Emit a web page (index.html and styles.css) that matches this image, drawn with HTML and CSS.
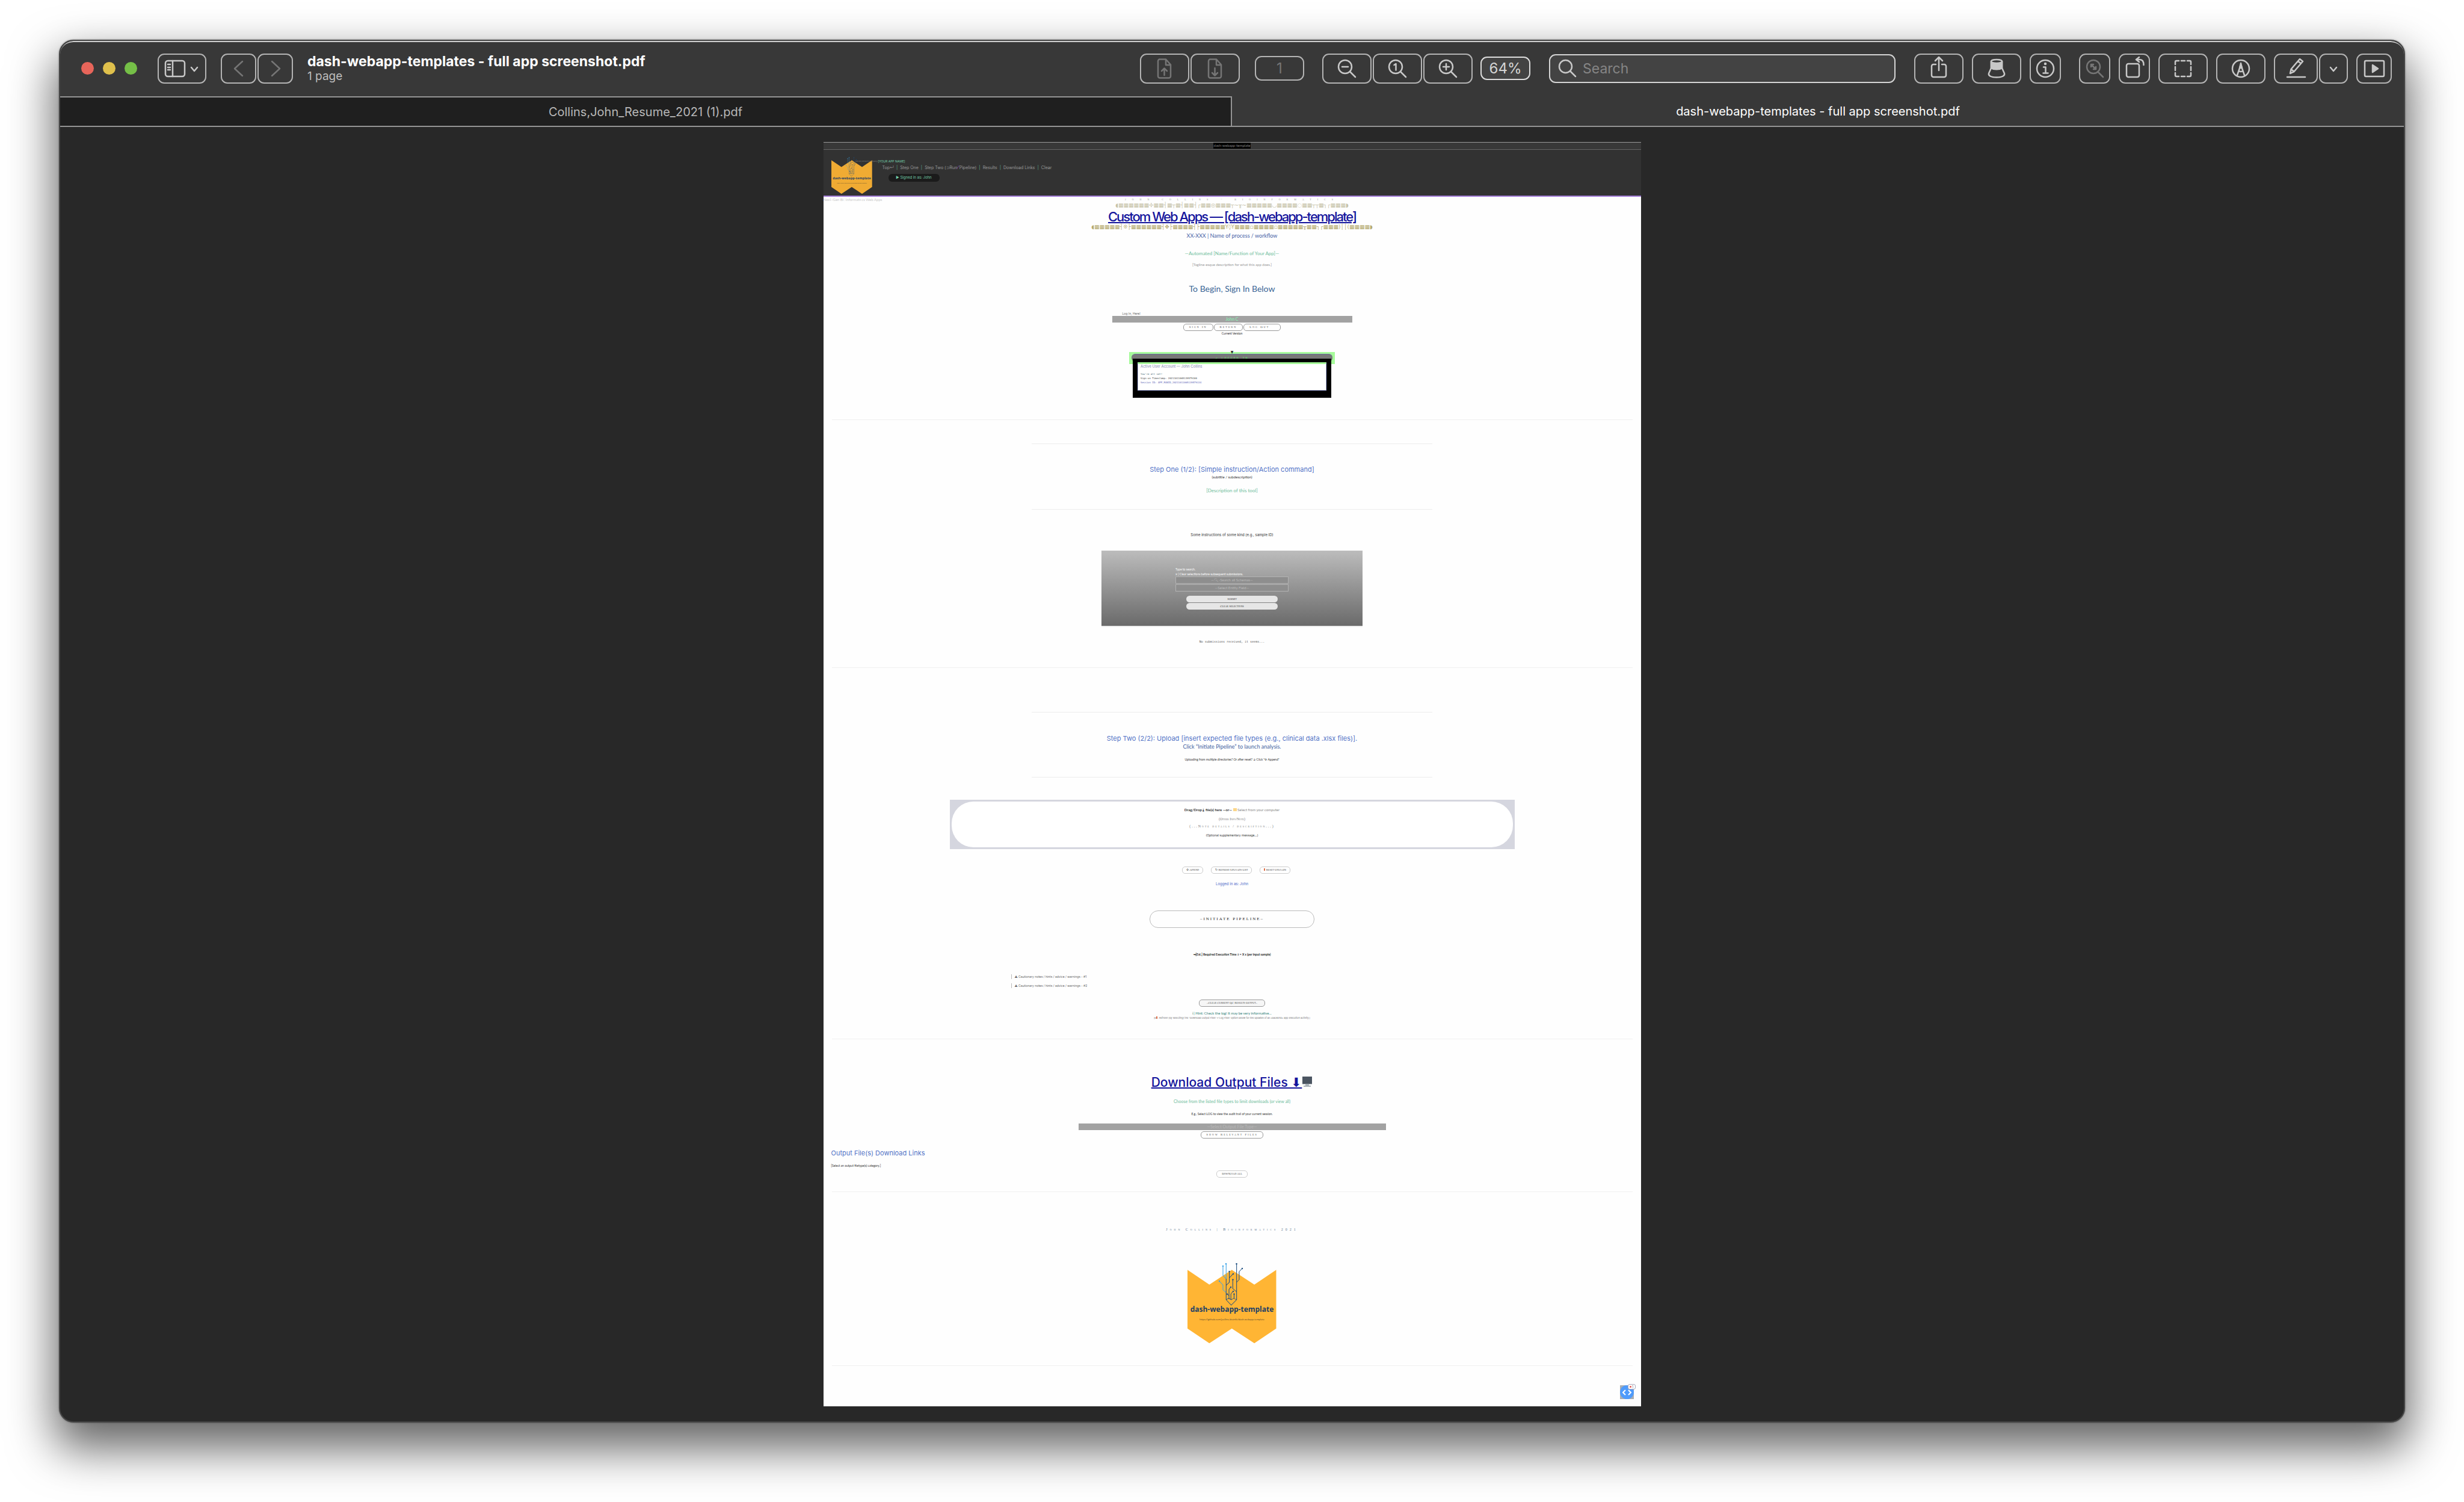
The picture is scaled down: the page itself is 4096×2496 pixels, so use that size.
FILE: index.html
```html
<!DOCTYPE html>
<html lang="en">
<head>
<meta charset="utf-8">
<title>dash-webapp-templates - full app screenshot.pdf</title>
<link rel="stylesheet" href="styles.css">
</head>
<body>
<svg class="defs" aria-hidden="true">
  <symbol id="logo" viewBox="0 0 148 133">
    <path fill="#ffb534" transform="scale(.5267 .296) translate(-126 -252)" d="M126 290 195 373 266 290 337 373 406 290V619L337 702 266 619 195 702 126 619Z"/>
    <g fill="none" stroke="#1f4f80" transform="scale(.5267 .296) translate(-126 -252)" stroke-width="2">
      <path stroke="#3aa2e6" d="M238 268V322L248 340M226 353 238 375V402L248 417M248 254V340"/>
      <path d="M248 340V458M258 298V360L248 377M270 312 258 335M281 254V458M299 281 289 300V345L281 360M269 343V395L281 413M263 386 257 400V455M270 410 263 425V458M251 425 257 436M273 425V452M248 458 264 488 281 458M248 458 256 449 264 458 272 449 281 458"/>
    </g>
    <g fill="#1f4f80">
      <g fill="#3aa2e6"><circle cx="59" cy="5" r="1.2"/><circle cx="64" cy="1.3" r="1.2"/><circle cx="53" cy="30" r="1.2"/></g>
      <circle cx="81.500" cy="1.300" r="1.200"/><circle cx="91" cy="9" r="1.200"/><circle cx="69.500" cy="14" r="1.200"/><circle cx="76" cy="18" r="1.200"/><circle cx="75.500" cy="27.500" r="1.200"/><circle cx="72" cy="40" r="1.200"/><circle cx="76" cy="47" r="1.200"/><circle cx="66" cy="51.500" r="1.200"/><circle cx="77.500" cy="51.500" r="1.200"/>
    </g>
  </symbol>
</svg>

<main class="window">
  <header class="toolbar">
    <div class="lights"><i class="light red"></i><i class="light yellow"></i><i class="light green"></i></div>
    <button class="tb sidebar" aria-label="Sidebar"><svg width="60" height="36" viewBox="0 0 60 36"><rect x="2" y="5" width="32" height="26" rx="4"/><path d="M14 5v26M6 11h4M6 16h4M6 20h4M45 16l5 6 5-6"/></svg></button>
    <div class="group nav-arrows">
      <button class="tb dim" aria-label="Back"><svg width="36" height="36" viewBox="0 0 36 36"><path d="M24 6 11 18 24 30"/></svg></button>
      <button class="tb dim" aria-label="Forward"><svg width="36" height="36" viewBox="0 0 36 36"><path d="M12 6 25 18 12 30"/></svg></button>
    </div>
    <div class="doc-title"><h1>dash-webapp-templates - full app screenshot.pdf</h1><p>1 page</p></div>
    <div class="group">
      <button class="tb dim w82" aria-label="Previous page"><svg width="36" height="36" viewBox="0 0 36 36"><path d="M9 2.500h11l8 9v19a3 3 0 0 1-3 3H10a3 3 0 0 1-3-3v-25a3 3 0 0 1 3-3zM20 3v9h8M17.500 29V18M13 22l4.500-4.500L22 22"/></svg></button>
      <button class="tb dim w82" aria-label="Next page"><svg width="36" height="36" viewBox="0 0 36 36"><path d="M9 2.500h11l8 9v19a3 3 0 0 1-3 3H10a3 3 0 0 1-3-3v-25a3 3 0 0 1 3-3zM20 3v9h8M17.500 17v12M13 25l4.500 4.500L22 25"/></svg></button>
    </div>
    <input class="tb page-no w82" aria-label="Page number" value="1">
    <div class="group zooms">
      <button class="tb w82" aria-label="Zoom out"><svg width="36" height="36" viewBox="0 0 36 36"><circle cx="15" cy="15" r="11"/><path d="M23 23l9 9M10 15h10"/></svg></button>
      <button class="tb w82" aria-label="Actual size"><svg width="36" height="36" viewBox="0 0 36 36"><circle cx="15" cy="15" r="11"/><path d="M23 23l9 9M12.500 12l3-2v10.500"/></svg></button>
      <button class="tb w82" aria-label="Zoom in"><svg width="36" height="36" viewBox="0 0 36 36"><circle cx="15" cy="15" r="11"/><path d="M23 23l9 9M10 15h10M15 10v10"/></svg></button>
    </div>
    <input class="tb percent" aria-label="Zoom level" value="64%">
    <label class="tb search"><svg width="36" height="36" viewBox="0 0 36 36"><circle cx="14.500" cy="14.500" r="10.500"/><path d="M22 22l9 9"/></svg><input type="search" placeholder="Search" aria-label="Search"></label>
    <div class="actions">
      <button class="tb w82" aria-label="Share"><svg width="36" height="36" viewBox="0 0 36 36"><path d="M13 11H9a3 3 0 0 0-3 3v15a3 3 0 0 0 3 3h18a3 3 0 0 0 3-3V14a3 3 0 0 0-3-3h-4M18 21V-1M12 5l6-6 6 6"/></svg></button>
      <button class="tb w82" aria-label="Stamp"><svg width="36" height="36" viewBox="0 0 36 36"><path d="M9 6v11l-4 9c-1 4 4 6.500 13 6.500s14-2.500 13-6.500L27 17V6"/><path class="solid" d="M9 6v11c4 3 14 3 18 0V6z"/><ellipse class="hole" cx="18" cy="6" rx="9" ry="3"/></svg></button>
      <button class="tb w52" aria-label="Info"><svg width="36" height="36" viewBox="0 0 36 36"><circle cx="18" cy="18" r="14"/><path d="M15 15.500h3.500v9.500M14.500 25.500h8"/><circle class="solid" cx="18" cy="10" r="1"/></svg></button>
      <button class="tb w52 dim wide-gap" aria-label="Zoom to selection"><svg width="36" height="36" viewBox="0 0 36 36"><circle cx="16" cy="15" r="11"/><path d="M23 23l9 9M12 11l8 8M12 15v-4h4M20 15v4h-4"/></svg></button>
      <button class="tb w52" aria-label="Rotate"><svg width="36" height="36" viewBox="0 0 36 36"><rect x="5" y="10" width="21" height="22" rx="3"/><path d="M22 3h5c4 0 6.500 3 6.500 9M26-1l-5 4 5 4"/></svg></button>
      <button class="tb w82" aria-label="Selection"><svg width="36" height="36" viewBox="0 0 36 36"><path d="M5 11V7q0-2 2-2h4M15 5h6M25 5h4q2 0 2 2v4M31 15v6M31 25v4q0 2-2 2h-4M21 31h-6M11 31H7q-2 0-2-2v-4M5 21v-6"/></svg></button>
      <button class="tb w82" aria-label="Markup"><svg width="36" height="36" viewBox="0 0 36 36"><circle cx="18" cy="18" r="14"/><path d="M12 29l5.500-16h1L24 29M14.500 22q3.500 2 7 0"/><path class="solid" d="M18 9l2 8h-4z"/></svg></button>
      <div class="group">
        <button class="tb w73" aria-label="Highlight"><svg width="36" height="36" viewBox="0 0 36 36"><path d="M8 26l1.500-7L24 2l5 4-14.500 17zM21 5.500l5 4M9.500 19l5 4M3 32h30"/></svg></button>
        <button class="tb w48" aria-label="Highlight options"><svg width="36" height="36" viewBox="0 0 36 36"><path d="M13 16l5 6 5-6"/></svg></button>
      </div>
      <button class="tb w59" aria-label="Slideshow"><svg width="40" height="36" viewBox="0 0 40 36"><rect x="4" y="5" width="32" height="26" rx="2"/><path class="solid" d="M17 12l9 6-9 6z"/></svg></button>
    </div>
  </header>

  <nav class="tabs"><a class="tab inactive" href="#resume">Collins,John_Resume_2021 (1).pdf</a><a class="tab" href="#page">dash-webapp-templates - full app screenshot.pdf</a></nav>

  <div class="workspace">
    <article class="page" id="page">
      <div class="ribbon"><span>dash-webapp-template</span></div>
      <header class="masthead">
        <svg class="logo-small" viewBox="0 0 148 133"><use href="#logo"/><text class="logo-name" x="74" y="81" text-anchor="middle">dash-webapp-template</text><text class="logo-url" x="74" y="95" text-anchor="middle">https://github.com/jcollins-bioinfo/dash-webapp-template</text></svg>
        <div class="mast-body">
          <p class="app-name"><span class="company">[server/network/company]</span>[YOUR APP NAME]</p>
          <nav class="site-nav"><a href="#top">Top↵</a><b>|</b><a href="#one">Step One</a><b>|</b><a href="#two">Step Two (⊃Run<em>⁄</em> Pipeline)</a><b>|</b><a href="#results">Results</a><b>|</b><a href="#links">Download Links</a><b>|</b><a href="#clear">Clear</a></nav>
          <p class="signed"><span>▶</span> Signed in as: John</p>
        </div>
      </header>

      <section class="hero" id="top">
        <div class="strap"><span class="nextgen">Nex⸸-Gen Bi◌informat⋄cs Web Apps</span><span class="byline">JOHN COLLINS ~ BIOINFORMATICS</span><span></span></div>
        <p class="garland pale">◖▦▦▦▦▦▦✢▦▦┤▦┬▦┤▦▦┤┌▦▦◎▦▦▦┬~╥~▦▦▦▦▦◡▦▦▦▦◌▦▦┬┬▦┐┌▦▦▦◗</p>
        <a class="big-title" href="#top">Custom Web Apps — [dash-webapp-template]</a>
        <p class="garland">◖▦▦▦▦▦┤❊├▦▦▦▦▦▦┤✥├▦▦▦▦┤├▦▦▦▦▦Y◊Y▦▦▦▫▦▦▦▦▫▦▦▦▦▦╥▦▦┐┌▦▦▦)││(▦▦▦▦◗</p>
        <p class="process">XX-XXX | Name of process / workflow</p>
        <p class="automated">—Automated [Name/Function of Your App]—</p>
        <p class="blurb">[Tagline-esque description for what this app does.]</p>
        <h2 class="begin">To Begin, Sign In Below</h2>
        <div class="login">
          <label for="user">Log In, Here!</label>
          <select id="user" class="bar"><option>John C</option></select>
        </div>
        <div class="pills"><button class="pill spaced">Sign In</button><button class="pill spaced">Return</button><button class="pill spaced wide">Log Out</button></div>
        <p class="version">Current Version</p>
        <div class="status"><i>▼</i><span>✔ LOGGED IN</span></div>
        <div class="account"><div class="account-card">
          <h3>Active User Account — John Collins</h3>
          <p class="ok">You're all set!</p>
          <p>Sign-on Timestamp: 20211011065139579100</p>
          <p class="sid">Session ID: APP_RUNID_20211011065139579134</p>
        </div></div>
      </section>
      <hr class="full after-hero">

      <section class="step-one" id="one">
        <hr>
        <h2 class="step">Step One (1/2): [Simple instruction/Action command]</h2>
        <p class="sub">(subtitle / subdescription)</p>
        <p class="desc">[Description of this tool]</p>
        <hr>
        <p class="instr">Some instructions of some kind (e.g., sample ID)</p>
        <form class="panel">
          <p>Type to search.</p>
          <p>ⅹ | Clear selections before subsequent submissions.</p>
          <select aria-label="Schemas"><option>—🔍︎-Search all Schemas—</option></select>
          <select aria-label="Entity field"><option>—Select Entity Field—</option></select>
          <button type="button">Submit</button>
          <button type="button">Clear Selections</button>
        </form>
        <p class="none">No submissions received, it seems...</p>
      </section>
      <hr class="full after-one">

      <section class="step-two" id="two">
        <hr>
        <h2 class="step">Step Two (2/2): Upload [insert expected file types (e.g., clinical data .xlsx files)].</h2>
        <p class="click">Click “Initiate Pipeline” to launch analysis.</p>
        <p class="multi">Uploading from multiple directories? Or after reset? ➲ Click "✣ Append"</p>
        <hr>
        <div class="drop"><div class="drop-in">
          <p class="drag"><b>Drag/Drop ⤓ file(s) here —or—</b> <i class="folder"></i> <a href="#files">Select from your computer</a></p>
          <p class="other">(Other Info/Note)</p>
          <p class="note">(...Note details / description...)</p>
          <p class="optional">(Optional supplementary message...)</p>
        </div></div>
        <div class="pills uploads"><button class="pill">✣ Append</button><button class="pill">↻ Refresh Uploads List</button><button class="pill"><i class="pin"></i> Reset Uploads</button></div>
        <p class="logged">Logged in as: John</p>
        <button class="initiate">–INITIATE PIPELINE–</button>
        <p class="est">➥[Est.] Required Execution Time ≤ ≈ X s (per input sample)</p>
        <ul class="notes"><li>⚠ Cautionary notes / hints / advice / warnings - #1</li><li>⚠ Cautionary notes / hints / advice / warnings - #2</li></ul>
        <button class="pill clear-qc" id="clear">–Clear Current QC Results Output–</button>
        <p class="hint">ℹ︎| Hint: Check the log! It may be very informative...</p>
        <p class="refresh">(➥<i class="pin"></i>: Refresh [by selecting] the 'Download Output Files'→'Log Files' option below for live updates of all «backend» app execution activity.)</p>
      </section>
      <hr class="full after-two">

      <section class="results" id="results">
        <a class="dl-title" href="#links">Download Output Files ⬇<svg width="18" height="18" viewBox="0 0 18 18"><rect x="1" y="1" width="16" height="12" fill="#4b5561"/><path fill="#a9b1b8" d="M1 13h16v1H1zM6 14h6v2H6zM3 16h12v2H3z"/></svg></a>
        <p class="choose">Choose from the listed file types to limit downloads (or view all)</p>
        <p class="eg">E.g., Select LOG to view the audit trail of your current session.</p>
        <select class="bar types" aria-label="Output file type"><option>—Select Output File Type—</option></select>
        <button class="pill show">Show Relevant Files</button>
        <div class="links" id="links"><h2 class="step">Output File(s) Download Links</h2><p>[Select an output filetype(s) category.]</p></div>
        <button class="pill all">Download All</button>
      </section>
      <hr class="full after-results">

      <footer class="colophon">
        <p>John Collins | Bioinformatics 2021</p>
        <svg viewBox="0 0 148 133"><use href="#logo"/><text class="logo-name" x="74" y="81" text-anchor="middle">dash-webapp-template</text><text class="logo-url" x="74" y="95" text-anchor="middle">https://github.com/jcollins-bioinfo/dash-webapp-template</text></svg>
      </footer>
      <hr class="full after-logo">
      <button class="fab" aria-label="Debug menu"><svg viewBox="0 0 23 23"><ellipse cx="11.500" cy="11.500" rx="11.500" ry="11.500" fill="#4f9bfb"/><path d="M9 8 5 12l4 4M14 8l4 4-4 4" fill="none" stroke="#fff" stroke-width="2"/></svg><span><i></i>1</span></button>
    </article>
  </div>
</main>
</body>
</html>
```
FILE: styles.css
```css
* { box-sizing: border-box; }
body { margin: 0; background: #fff; font-family: Inter, "Liberation Sans", sans-serif; display: flow-root; }
h1, h2, h3, p, ul { margin: 0; padding: 0; font-weight: 400; }
a { color: inherit; text-decoration: none; }
button, input, select { font: inherit; color: inherit; margin: 0; padding: 0; background: none; border: 0; border-radius: 0; outline: 0; }
select { appearance: none; display: block; text-align: center; text-align-last: center; }
.defs { position: absolute; width: 0; height: 0; }

.window { margin: 66px 98px 132px; border: 2px solid #454545; border-radius: 24px; overflow: hidden; background: #282828;
  box-shadow: 0 0 3px rgba(0,0,0,.4), 0 36px 76px 8px rgba(0,0,0,.6); }
.toolbar { display: flex; align-items: center; height: 92px; padding: 0 20px 3px 35px; background: #383838; color: #c8c8c8; border-top: 2px solid #cfcfcf; border-radius: 22px 22px 0 0; }
.lights { display: flex; gap: 15px; margin-right: 34px; }
.light { width: 21px; height: 21px; border-radius: 50%; }
.red { background: #e7655a; }
.yellow { background: #dfc04c; }
.green { background: #75bf47; }
.tb { display: flex; align-items: center; justify-content: center; flex: none; height: 50px; border: 2px solid #b4b4b4; border-radius: 11px; }
.tb svg { display: block; fill: none; stroke: currentColor; stroke-width: 2.500; stroke-linecap: round; stroke-linejoin: round; overflow: visible; }
.tb .solid { fill: currentColor; }
.tb .hole { fill: #383838; }
.dim { color: #757575; }
.group { display: flex; gap: 2px; flex: none; }
.sidebar { width: 81px; }
.nav-arrows { margin-left: 24px; }
.nav-arrows .tb { width: 59px; }
.w82 { width: 82px; }
.w73 { width: 73px; }
.w59 { width: 59px; }
.w52 { width: 52px; }
.w48 { width: 48px; }
.doc-title { flex: 1; margin-left: 24px; white-space: nowrap; }
.doc-title h1 { font-size: 23px; line-height: 26px; font-weight: 700; color: #fff; }
.doc-title p { font-size: 19px; line-height: 24px; color: #bdbdbd; }
.page-no { height: 41px; margin: 0 30px 0 25px; font-size: 24px; text-align: center; color: #757575; }
.percent { width: 83px; height: 39px; margin: 0 31px 0 13px; font-size: 24px; text-align: center; color: #d4d4d4; background: #434343; border-color: #dcdcdc; }
.search { width: 576px; height: 48px; background: #434343; border-color: #d4d4d4; justify-content: flex-start; padding-left: 11px; gap: 7px; }
.search input { flex: 1; font-size: 23px; }
.search input::placeholder { color: #858585; opacity: 1; }
.actions { display: flex; gap: 14px; margin-left: 31px; flex: none; }
.wide-gap { margin-left: 16px; }

.tabs { display: grid; grid-template-columns: 1fr 1fr; height: 51px; border-bottom: 2px solid #949494; background: #383838; }
.tab { display: flex; align-items: center; justify-content: center; font-size: 20px; color: #fff; }
.inactive { background: #1f1f1f; color: #b8b8b8; border-top: 2px solid #949494; border-right: 2px solid #949494; }
.workspace { padding: 25px 0; }

.page { position: relative; width: 35%; max-width: 1359px; margin: 0 auto; padding-bottom: 67px; background: #fefefe; color: #333; font-size: 6px; line-height: 8px; text-align: center; white-space: nowrap; }
.ribbon { height: 13px; background: #383838; border-top: 1px solid #999; border-bottom: 1px solid #666; }
.ribbon span { display: inline-block; padding: 0 1px; background: #000; color: #808080; font: 6px/10px Lato, sans-serif; }
.masthead { display: flex; gap: 10px; height: 78px; padding: 12px 13px; background: #323232; border-bottom: 2px solid #a27bd6; text-align: left; }
.logo-small { width: 68px; height: 61px; opacity: .93; }
.logo-name { font: 700 12px "Open Sans", sans-serif; fill: #1d3f66; }
.logo-url { font: 4px "Open Sans", sans-serif; fill: #4b4030; }
.mast-body { padding-top: 3px; }
.app-name { position: relative; font-size: 5px; color: #74cda9; }
.company { position: absolute; right: 100%; font-size: 3px; color: #777; }
.site-nav { display: flex; gap: 4px; margin: 2px 0 5px 7px; font-size: 7px; line-height: 10px; color: #999; }
.site-nav b { color: #5cab8c; font-weight: 400; }
.site-nav em { color: #9a55d0; }
.signed { width: 85px; height: 13px; margin-left: 17px; border-radius: 6px; background: #1b1b1b; color: #74cda9; font-size: 6px; line-height: 12px; text-align: center; }

.strap { display: grid; grid-template-columns: 1fr auto 1fr; height: 9px; line-height: 9px; }
.nextgen { text-align: left; color: #c8c8c8; font: 6px/10px Lato, sans-serif; }
.byline { font: 4px/9px "Liberation Serif", serif; letter-spacing: 10px; color: #888; }
.garland { height: 10px; font: 9px/10px "DejaVu Sans", sans-serif; color: #b5aa70; }
.pale { color: #c6c2a8; }
.big-title { display: block; margin-top: 2px; font-size: 22px; line-height: 24px; font-weight: 500; letter-spacing: -2px; color: #14149c; text-decoration: underline; text-decoration-thickness: 2px; }
.process, .automated, .blurb, .begin, .version, .sub, .desc, .click, .multi, .choose, .eg, .est, .drag, .panel, .hint, .links p, .bar { font-family: Lato, "Liberation Sans", sans-serif; }
.process { margin-top: 2px; font-size: 9px; line-height: 16px; color: #4560a5; }
.automated { margin-top: 15px; font-size: 8px; line-height: 12px; color: #6fbd9c; }
.blurb { margin-top: 9px; color: #999; }
.begin { margin-top: 24px; font-size: 14px; line-height: 24px; color: #3a6595; }
.login { width: 399px; margin: 25px auto 0; text-align: left; }
.login label { display: block; padding-left: 17px; font-size: 5px; color: #666; }
.bar { width: 100%; height: 11px; background: #a2a2a2; color: #86f5b4; font-size: 7px; line-height: 11px; }
.pills { display: flex; justify-content: center; margin-top: 2px; gap: 1px; }
.pill { height: 12px; padding: 0 8px; border: 1px solid #999; border-radius: 5px; background: #fff; color: #444; font: 5px/10px "Liberation Serif", serif; font-variant: small-caps; }
.spaced { letter-spacing: 2px; padding: 0 9px; }
.wide { padding-right: 18px; }
.version { font-size: 5px; color: #222; }
.status { position: relative; width: 342px; height: 20px; margin: 27px auto 0; padding: 3px 4px 0; background: #a6fb9a; }
.status i { position: absolute; left: 0; right: 0; top: -3px; font: 6px/6px "DejaVu Sans", sans-serif; color: #222; }
.status span { display: block; height: 13px; border-top: 1px solid #6a6aa0; border-radius: 6px; background: #787878; color: #5fe06a; font: 5px/12px "DejaVu Sans Mono", monospace; letter-spacing: 2px; }
.account { position: relative; width: 330px; margin: -9px auto 0; padding: 6px 8px 12px; background: #000; }
.account-card { padding: 0 4px 9px; background: #fff; border: 1px solid #b3bbf0; border-top: 3px solid #a6fb9a; text-align: left; font: 4px/7px "DejaVu Sans Mono", monospace; color: #444; }
.account-card h3 { margin-bottom: 5px; font: 6px/8px Inter, sans-serif; color: #8088b0; }
.ok { color: #3c6670; }
.sid { color: #5b62b5; }

hr { width: 666px; max-width: 100%; height: 1px; margin: 0 auto; border: 0; background: #ececec; }
.full { width: auto; margin: 0 14px; background: #f0f0f0; }
.after-hero { margin-top: 36px; }
.step { font-size: 11px; line-height: 16px; color: #5273c6; }
.step-one { padding: 39px 0; }
.step-one .step { margin-top: 34px; }
.sub { margin-top: 1px; }
.desc { margin: 12px 0 25px; font-size: 8px; line-height: 12px; color: #6fbd9c; }
.instr { margin-top: 37px; line-height: 10px; }
.panel { display: grid; width: 434px; margin: 21px auto 0; padding: 27px 123px 26px; background: linear-gradient(#bcbcbc, #6a6a6a); box-shadow: 0 2px #ececec; color: #fff; font-size: 5px; text-align: left; }
.panel select { height: 12px; margin-bottom: 1px; background: #8e8e8e; border: 1px solid #b2b2b2; color: #bbb; font-size: 6px; }
.panel button { height: 11px; margin: 0 18px 1px; border-radius: 6px; background: #e6e6e6; color: #333; font: 5px/11px "Liberation Serif", serif; font-variant: small-caps; }
.panel select + button { margin-top: 6px; }
.none { margin-top: 22px; font: 5px/8px "DejaVu Sans Mono", monospace; color: #555; }

.step-two { padding: 73px 0 30px; }
.step-two .step { margin-top: 35px; }
.click { font-size: 9px; line-height: 12px; color: #3f5fa0; }
.multi { margin: 11px 0 25px; font-size: 5px; }
.drop { width: 939px; max-width: 100%; margin: 37px auto 0; padding: 3px; background: #d5d6df; }
.drop-in { padding: 10px 0 16px; border-radius: 36px; background: #fff; }
.drag a { color: #888; }
.folder { display: inline-block; width: 6px; height: 5px; background: #fbd68a; }
.pin { display: inline-block; width: 2px; height: 4px; background: #e0704a; }
.other, .note { font-family: "Liberation Serif", serif; font-variant: small-caps; color: #777; }
.other { margin-top: 7px; }
.note { margin-top: 4px; letter-spacing: 2px; }
.optional { margin-top: 7px; font-size: 5px; }
.uploads { gap: 13px; margin: 29px 0 0 14px; }
.uploads .pill { padding: 0 6px; border-color: #ccc; }
.logged { margin-top: 13px; color: #4a68c8; }
.initiate { display: block; width: 274px; height: 29px; margin: 40px auto 0; border: 1px solid #bbb; border-radius: 14px; color: #222; font: 7px/27px "Liberation Serif", serif; letter-spacing: 2px; }
.est { margin-top: 40px; font-size: 5px; font-weight: 700; color: #222; }
.notes { margin: 29px 0 19px 312px; list-style: none; text-align: left; font-size: 5px; color: #666; }
.notes li { padding-left: 6px; background: linear-gradient(#bbb, #bbb) no-repeat 0 0 / 1px 100%; }
.notes li + li { margin-top: 7px; }
.clear-qc { display: block; margin: 0 auto 7px; padding: 0 12px; background: #f6f6f6; }
.hint { color: #2f7f78; }
.refresh { height: 8px; font-size: 4px; color: #777; }

.results { padding: 60px 0 23px; }
.dl-title { display: block; font-size: 21px; line-height: 24px; font-weight: 500; color: #14149c; text-decoration: underline; text-decoration-thickness: 2px; }
.choose { margin-top: 14px; font-size: 7px; line-height: 10px; color: #6fbd9c; }
.eg { margin-top: 12px; font-size: 5px; }
.types { width: 511px; margin: 12px auto 2px; color: #b8b8b8; }
.show { display: block; margin: 0 auto; letter-spacing: 2px; }
.links { margin: 16px 0 4px 13px; text-align: left; }
.links p { margin-top: 9px; font-size: 5px; }
.all { display: block; margin: 0 auto; border-color: #ccc; }
.colophon p { margin-top: 58px; font: 6px/8px "Liberation Serif", serif; font-variant: small-caps; letter-spacing: 4px; color: #607890; }
.colophon svg { display: block; width: 148px; height: 133px; margin: 52px auto 37px; }
.fab { position: absolute; right: 12px; bottom: 12px; width: 23px; height: 23px; background: #a9adb3; }
.fab svg { display: block; }
.fab span { position: absolute; right: -3px; top: -2px; width: 13px; height: 9px; border: 1px solid #aab; border-radius: 3px; background: #fff; font: 6px/7px Inter, sans-serif; color: #888; }
.fab i { display: inline-block; width: 3px; height: 3px; margin-right: 1px; border-radius: 50%; background: #e05050; vertical-align: 1px; }
```
